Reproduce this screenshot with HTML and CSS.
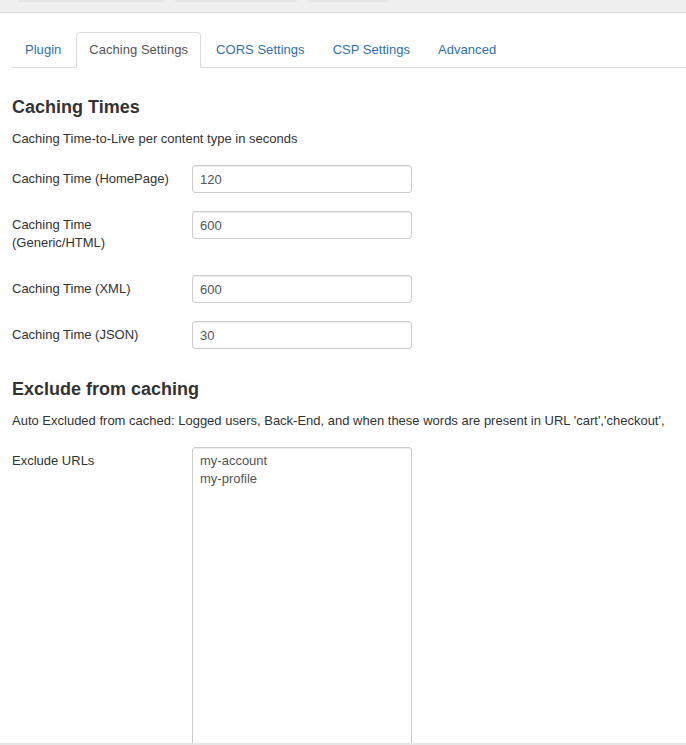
FILE: index.html
```html
<!DOCTYPE html>
<html lang="en">
<head>
<meta charset="utf-8">
<title>Caching Settings</title>
<link rel="stylesheet" href="styles.css">
</head>
<body>
<div class="page">
  <div class="toolbar">
    <span class="tb-btn tb-1"></span>
    <span class="tb-btn tb-2"></span>
    <span class="tb-btn tb-3"></span>
  </div>
  <div class="content">
    <ul class="tabs">
      <li class="tab"><a href="#">Plugin</a></li>
      <li class="tab active"><a href="#">Caching Settings</a></li>
      <li class="tab"><a href="#">CORS Settings</a></li>
      <li class="tab"><a href="#">CSP Settings</a></li>
      <li class="tab"><a href="#">Advanced</a></li>
    </ul>
    <div class="pane">
      <h3 class="section-title">Caching Times</h3>
      <p class="section-desc">Caching Time-to-Live per content type in seconds</p>
      <div class="group">
        <label class="label">Caching Time (HomePage)</label>
        <div class="controls"><input class="input" type="text" value="120"></div>
      </div>
      <div class="group">
        <label class="label">Caching Time (Generic/HTML)</label>
        <div class="controls"><input class="input" type="text" value="600"></div>
      </div>
      <div class="group">
        <label class="label">Caching Time (XML)</label>
        <div class="controls"><input class="input" type="text" value="600"></div>
      </div>
      <div class="group">
        <label class="label">Caching Time (JSON)</label>
        <div class="controls"><input class="input" type="text" value="30"></div>
      </div>

      <h3 class="section-title second">Exclude from caching</h3>
      <p class="section-desc">Auto Excluded from cached: Logged users, Back-End, and when these words are present in URL 'cart','checkout',</p>
      <div class="group">
        <label class="label">Exclude URLs</label>
        <div class="controls"><textarea class="textarea">my-account
my-profile</textarea></div>
      </div>
    </div>
  </div>
  <div class="footer"></div>
</div>
</body>
</html>
```

FILE: styles.css
```css
* { box-sizing: border-box; }
html, body { margin: 0; padding: 0; background: #fff; }
body {
  font-family: "Liberation Sans", Arial, sans-serif;
  font-size: 13px;
  line-height: 18px;
  color: #333;
}
.page {
  height: 745px;
  display: flex;
  flex-direction: column;
  overflow: hidden;
}
.toolbar {
  height: 13px;
  flex: none;
  background: #f0f0f0;
  border-bottom: 1px solid #dcdcdc;
  display: flex;
  align-items: flex-start;
}
.tb-btn {
  display: block;
  height: 1px;
  background: #e8e8e8;
  box-shadow: 0 1px 1px rgba(0,0,0,0.06);
  border-radius: 0 0 3px 3px;
}
.tb-1 { margin-left: 18px; width: 147px; }
.tb-2 { margin-left: 10px; width: 122px; }
.tb-3 { margin-left: 10px; width: 82px; }

.content {
  flex: 1;
  overflow: hidden;
  padding: 19px 0 0 12px;
}
.tabs {
  list-style: none;
  margin: 0;
  padding: 0;
  display: flex;
  border-bottom: 1px solid #ddd;
}
.tab { margin-right: 2px; margin-bottom: -1px; }
.tab a {
  display: block;
  padding: 8px 12px;
  line-height: 18px;
  color: #3071a9;
  text-decoration: none;
  border: 1px solid transparent;
  border-radius: 4px 4px 0 0;
  letter-spacing: 0.03px;
}
.tab.active a {
  color: #555;
  background: #fff;
  border-color: #ddd #ddd transparent;
}
.pane { padding-top: 18px; }
.section-title {
  margin: 10px 0 12px;
  font-size: 18px;
  line-height: 22px;
  font-weight: bold;
  color: #333;
}
.section-title.second { margin-top: 29px; }
.section-desc { margin: 0 0 17px; }
.group {
  display: flex;
  align-items: flex-start;
  margin-bottom: 18px;
}
.label {
  width: 160px;
  margin-right: 20px;
  padding: 5px 0;
  flex: none;
}
.input, .textarea {
  width: 220px;
  padding: 4px 7px;
  font-family: "Liberation Sans", Arial, sans-serif;
  font-size: 13px;
  line-height: 18px;
  color: #555;
  border: 1px solid #ccc;
  border-radius: 3px;
  background: #fff;
  box-shadow: inset 0 1px 1px rgba(0,0,0,0.075);
  margin: 0;
  display: block;
}
.input { height: 28px; }
.textarea { height: 310px; resize: none; overflow: hidden; }
.footer {
  flex: none;
  height: 2px;
  background: #e6e6e6;
}
```
